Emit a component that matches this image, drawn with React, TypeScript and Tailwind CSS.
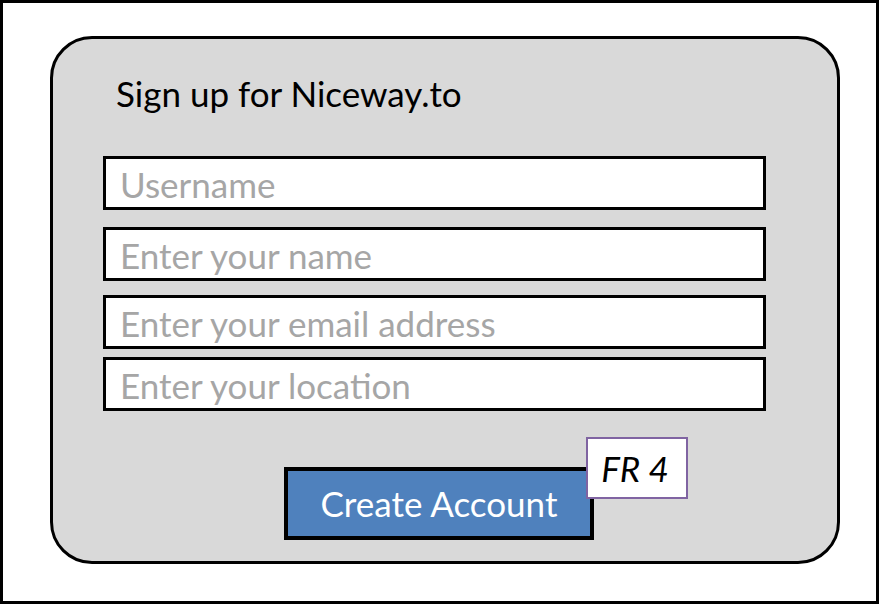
const fields = [
  { placeholder: "Username", mt: "mt-0" },
  { placeholder: "Enter your name", mt: "mt-[17px]" },
  { placeholder: "Enter your email address", mt: "mt-[14px]" },
  { placeholder: "Enter your location", mt: "mt-[8px]" },
];

export default function App() {
  return (
    <div className="w-[879px] h-[604px] border-[3px] border-black bg-white font-['Lato',sans-serif]">
      {/* signup card */}
      <div className="ml-[47px] mt-[33px] w-[790px] h-[528px] rounded-[42px] border-[3px] border-black bg-[#d9d9d9]">
        <h1 className="ml-[63px] mt-[37px] h-[35px] text-[35px] leading-none text-black">
          Sign up for Niceway.to
        </h1>

        <div className="ml-[50px] mt-[45px] w-[663px] flex flex-col">
          {fields.map((f) => (
            <div
              key={f.placeholder}
              className={`${f.mt} h-[54px] border-[3px] border-black bg-white`}
            >
              <input
                type="text"
                placeholder={f.placeholder}
                className="w-full h-full pl-[14px] pt-[1px] bg-transparent text-[35px] text-black outline-none placeholder:text-[#a6a6a6]"
              />
            </div>
          ))}
        </div>

        <div className="relative ml-[231px] mt-[56px] w-[310px]">
          <button className="w-[310px] h-[73px] border-4 border-black bg-[#4f81bd] text-white text-[35px]">
            Create Account
          </button>
          {/* requirement tag */}
          <div className="absolute left-[302px] top-[-30px] w-[102px] h-[62px] border-2 border-[#8064a2] bg-white flex items-center justify-center pr-[4px] text-[35px] italic text-black">
            FR 4
          </div>
        </div>
      </div>
    </div>
  );
}
